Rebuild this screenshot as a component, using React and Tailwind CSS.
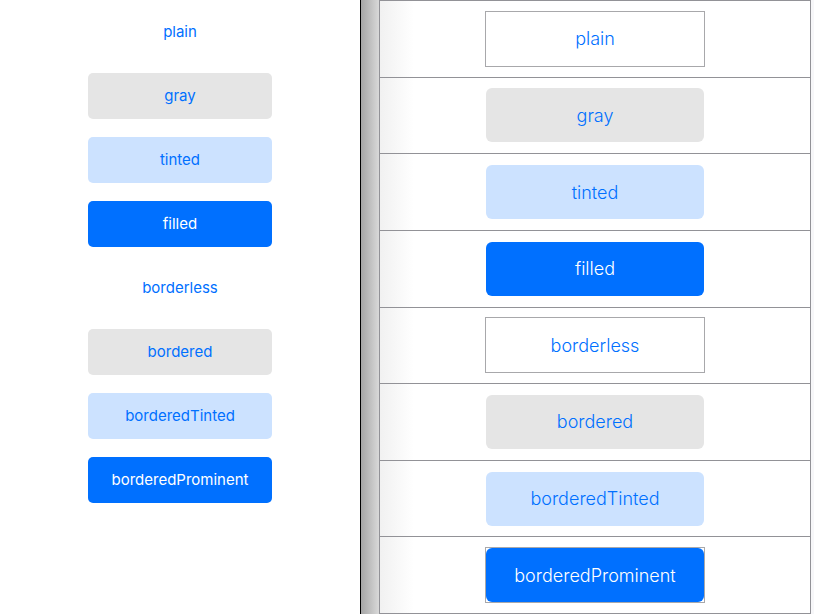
const variants = [
  { name: "plain", look: "text-[#0070ff]", outlined: true },
  { name: "gray", look: "bg-[#e5e5e5] text-[#0070ff]" },
  { name: "tinted", look: "bg-[#cce2ff] text-[#0070ff]" },
  { name: "filled", look: "bg-[#0070ff] text-white" },
  { name: "borderless", look: "text-[#0070ff]", outlined: true },
  { name: "bordered", look: "bg-[#e5e5e5] text-[#0070ff]" },
  { name: "borderedTinted", look: "bg-[#cce2ff] text-[#0070ff]" },
  { name: "borderedProminent", look: "bg-[#0070ff] text-white", outlined: true },
];

function PreviewPane() {
  return (
    <section className="flex flex-col items-center gap-[18px] border-r border-black bg-white pt-[9px]">
      {variants.map((v) => (
        <button key={v.name} type="button" className={`h-[46px] w-[184px] rounded-[5px] text-[15px] ${v.look}`}>
          {v.name}
        </button>
      ))}
    </section>
  );
}

function LayoutPane() {
  return (
    <section className="flex bg-linear-to-r from-[#a6a6a6] to-[#d9d9d9] to-[18px] pl-[18px]">
      <div className="grid flex-1 grid-rows-8 border-x border-b border-[#929297] bg-linear-to-r from-[#f1f1f1] to-white to-[34px]">
        {variants.map((v) => (
          <div key={v.name} className="flex items-center justify-center border-t border-[#929297]">
            <div className={`border ${v.outlined ? "border-[#a8a8ab]" : "border-transparent"}`}>
              <button type="button" className={`block h-[54px] w-[218px] rounded-[6px] text-[18px] font-light ${v.look}`}>
                {v.name}
              </button>
            </div>
          </div>
        ))}
      </div>
      <div className="w-[3px] bg-[#f7f7f9]" />
    </section>
  );
}

export default function App() {
  return (
    <main className="grid min-h-screen grid-cols-[361fr_453fr] font-['Inter','Liberation_Sans',sans-serif]">
      <PreviewPane />
      <LayoutPane />
    </main>
  );
}
